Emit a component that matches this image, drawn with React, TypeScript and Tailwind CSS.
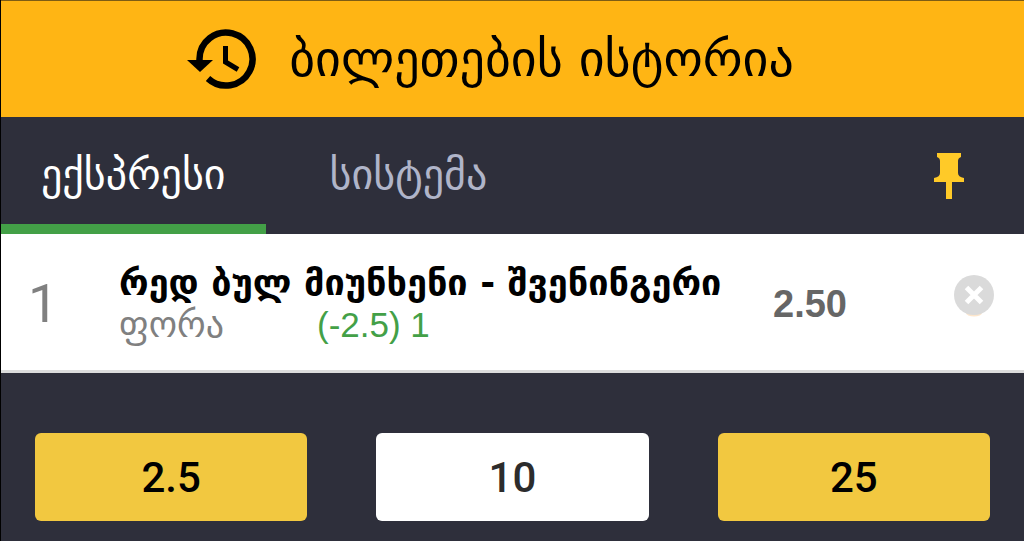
import { useState } from "react";
import { clsx } from "clsx";

const TABS = [
  { id: "express", label: "ექსპრესი" },
  { id: "system", label: "სისტემა" },
];

const STAKES = ["2.5", "10", "25"];

export default function App() {
  const [tab, setTab] = useState("express");
  const [stake, setStake] = useState("10");

  return (
    <main className="min-h-screen border-l border-black bg-[#2e2f3b] font-['DejaVu_Sans',sans-serif]">
      <HistoryHeader />
      <nav className="flex h-[117px] items-stretch">
        {TABS.map((item) => (
          <button
            key={item.id}
            type="button"
            onClick={() => setTab(item.id)}
            className={clsx(
              "border-b-10 pt-2 pr-10 text-[42px] leading-none",
              item.id === "express" ? "pl-10" : "pl-16",
              item.id === tab
                ? "border-[#43a047] text-white"
                : "border-transparent text-[#b0b5c9]",
            )}
          >
            {item.label}
          </button>
        ))}
        <button
          type="button"
          aria-label="Pin"
          className="mr-[60px] ml-auto self-center"
        >
          <PinIcon />
        </button>
      </nav>
      <BetRow />
      <div className="grid grid-cols-3 gap-[69px] px-[34px] pt-[60px] pb-5">
        {STAKES.map((value) => (
          <button
            key={value}
            type="button"
            onClick={() => setStake(value)}
            className={clsx(
              "h-[88px] rounded-md font-[Roboto,sans-serif] text-[42px] font-medium",
              value === stake
                ? "bg-white text-[#2c2c2c]"
                : "bg-[#f2c840] text-black",
            )}
          >
            {value}
          </button>
        ))}
      </div>
    </main>
  );
}

function HistoryHeader() {
  return (
    <header className="flex h-[117px] items-center justify-center gap-8 border-t border-[#7d5c14] bg-[#ffb514] pr-11">
      <HistoryIcon />
      <h1 className="text-[50px] leading-none whitespace-nowrap text-black">
        ბილეთების ისტორია
      </h1>
    </header>
  );
}

function BetRow() {
  return (
    <section className="flex h-[139px] items-center border-b-3 border-[#dcdcdc] bg-white pt-1">
      <span className="w-[118px] shrink-0 pl-[27px] font-[Roboto,sans-serif] text-[54px] leading-none text-[#808080]">
        1
      </span>
      <div className="flex-1">
        <h2 className="text-[36px] leading-[42px] font-bold whitespace-nowrap text-black">
          რედ ბულ მიუნხენი - შვენინგერი
        </h2>
        <p className="flex items-center leading-[42px]">
          <span className="w-[198px] text-[36px] text-[#808080]">ფორა</span>
          <span className="font-['Liberation_Sans',sans-serif] text-[35px] text-[#43a047]">
            (-2.5) 1
          </span>
        </p>
      </div>
      <span className="w-[180px] shrink-0 font-['Liberation_Sans',sans-serif] text-[38px] leading-none font-bold text-[#666]">
        2.50
      </span>
      <button type="button" aria-label="Remove" className="mr-[29px] mb-4">
        <RemoveIcon />
      </button>
    </section>
  );
}

function HistoryIcon() {
  return (
    <svg width="70" height="60" viewBox="0 0 70 60" fill="none">
      <path
        d="M12.5 33 V30 A26.5 26.5 0 1 1 21 49.5"
        stroke="#000"
        strokeWidth="6.5"
      />
      <path d="M0 31 H26 L13 43 Z" fill="#000" />
      <path d="M38.5 17 V33 L51 40.5" stroke="#000" strokeWidth="5" />
    </svg>
  );
}

function PinIcon() {
  return (
    <svg width="30" height="46" viewBox="0 0 30 46" fill="#ffca28">
      <path d="M3 0 H27 V4 Q24 5 24 8 V20 Q24 24 30 25 V29 H18 V46 H12 V29 H0 V25 Q6 24 6 20 V8 Q6 5 3 4 Z" />
    </svg>
  );
}

function RemoveIcon() {
  return (
    <svg width="42" height="42" viewBox="0 0 42 42" fill="none">
      <ellipse cx="21" cy="38" rx="8" ry="3.5" fill="#fde6cc" />
      <circle cx="21" cy="20" r="20" fill="#dadada" />
      <path d="M13.5 12.5 L28.5 27.5 M28.5 12.5 L13.5 27.5" stroke="#fff" strokeWidth="5" />
    </svg>
  );
}
